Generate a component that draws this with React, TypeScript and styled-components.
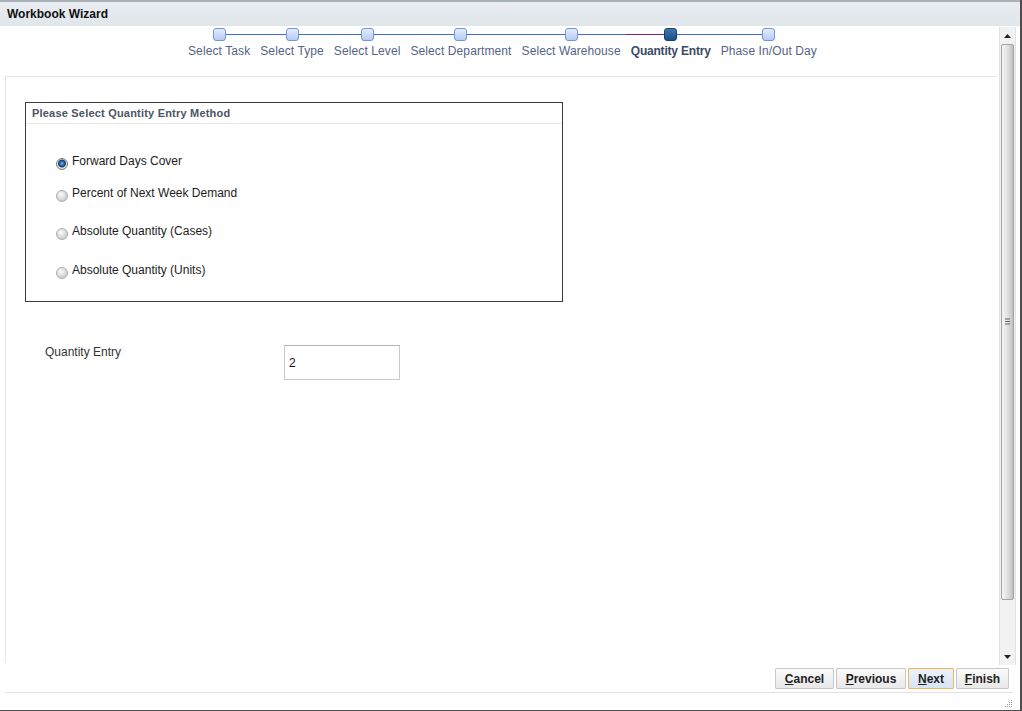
import React from "react";
import styled, { createGlobalStyle, css } from "styled-components";

const Global = createGlobalStyle`
  html, body { margin: 0; padding: 0; background: #ffffff; }
  body { font-family: "Liberation Sans", Arial, sans-serif; }
  * { box-sizing: border-box; }
`;

const Window = styled.div`
  width: 1022px;
  height: 711px;
  display: flex;
  flex-direction: column;
  background: #ffffff;
  border-right: 2px solid #4d4d4d;
  border-bottom: 1px solid #4d4d4d;
  overflow: hidden;
`;

const TitleBar = styled.div`
  height: 26px;
  flex: none;
  display: flex;
  align-items: center;
  padding: 0 7px;
  background: linear-gradient(#e9edf1, #e1e6eb);
  border-top: 2px solid #a9b1b9;
  font-size: 12px;
  font-weight: bold;
  color: #111;
`;

const Main = styled.div`
  flex: 1;
  display: flex;
  min-height: 0;
`;

const LeftColumn = styled.div`
  flex: 1;
  display: flex;
  flex-direction: column;
  min-width: 0;
`;

const Train = styled.div`
  height: 50px;
  flex: none;
  display: flex;
  justify-content: center;
  padding-left: 6px;
`;

const Step = styled.div<{ $first?: boolean; $last?: boolean; $leftColor?: string; $rightColor?: string }>`
  position: relative;
  display: flex;
  flex-direction: column;
  align-items: center;
  padding: 2px 5px 0;
  &::before, &::after {
    content: "";
    position: absolute;
    top: 8px;
    height: 1px;
  }
  &::before {
    left: 0;
    right: 50%;
    background: ${(p) => p.$leftColor || "#3c6fd6"};
    display: ${(p) => (p.$first ? "none" : "block")};
  }
  &::after {
    left: 50%;
    right: 0;
    background: ${(p) => p.$rightColor || "#3c6fd6"};
    display: ${(p) => (p.$last ? "none" : "block")};
  }
`;

const Node = styled.div<{ $current?: boolean }>`
  position: relative;
  z-index: 1;
  width: 13px;
  height: 13px;
  border-radius: 3px;
  ${(p) =>
    p.$current
      ? css`
          border: 1px solid #1d3f66;
          background: linear-gradient(#3f78b0, #1c4f86);
        `
      : css`
          border: 1px solid #6f94e0;
          background: linear-gradient(#e3ecfc, #b7ccf3);
        `}
`;

const StepLabel = styled.div<{ $current?: boolean }>`
  margin-top: 3px;
  font-size: 12px;
  line-height: 14px;
  white-space: nowrap;
  color: ${(p) => (p.$current ? "#3b4a66" : "#546484")};
  font-weight: ${(p) => (p.$current ? "bold" : "normal")};
  letter-spacing: ${(p) => (p.$current ? "-0.2px" : "0.1px")};
`;

const Panel = styled.div`
  flex: 1;
  margin: 0 2px 2px 5px;
  border-top: 1px solid #e6e6e6;
  border-left: 1px solid #e6e6e6;
  padding: 25px 0 0 19px;
`;

const MethodBox = styled.div`
  width: 538px;
  height: 200px;
  border: 1px solid #3a3a3a;
  display: flex;
  flex-direction: column;
`;

const BoxHeader = styled.div`
  height: 21px;
  flex: none;
  display: flex;
  align-items: center;
  padding: 0 6px;
  border-bottom: 1px solid #e8e8e8;
  font-size: 11px;
  font-weight: bold;
  letter-spacing: 0.2px;
  color: #4b5466;
`;

const RadioList = styled.div`
  display: flex;
  flex-direction: column;
  padding: 30px 0 0 30px;
`;

const RadioRow = styled.div<{ $gap: number }>`
  display: flex;
  align-items: flex-start;
  margin-top: ${(p) => p.$gap}px;
  height: 14px;
`;

const Radio = styled.span<{ $checked?: boolean }>`
  width: 12px;
  height: 12px;
  margin-top: 4px;
  margin-right: 4px;
  border-radius: 50%;
  flex: none;
  ${(p) =>
    p.$checked
      ? css`
          border: 1px solid #7a7a7a;
          background: radial-gradient(circle at 50% 45%, #7fb6e6 0, #2d6ba8 2px, #123e6a 3.5px, #eeeeee 4.5px, #c9c9c9 6px);
        `
      : css`
          border: 1px solid #adadad;
          background: radial-gradient(circle at 40% 35%, #fbfbfb 0, #e6e6e6 3px, #cfcfcf 6px);
        `}
`;

const RadioLabel = styled.span`
  font-size: 12px;
  line-height: 14px;
  color: #1c1c1c;
`;

const FormRow = styled.div`
  display: flex;
  align-items: flex-start;
  margin-top: 43px;
  padding-left: 20px;
`;

const FieldLabel = styled.div`
  width: 239px;
  font-size: 12px;
  line-height: 14px;
  color: #333;
`;

const TextInput = styled.div`
  width: 116px;
  height: 35px;
  border: 1px solid #c9c9c9;
  border-top-color: #b4b4b4;
  display: flex;
  align-items: center;
  padding: 0 4px;
  font-size: 12px;
  color: #111;
`;

const Scrollbar = styled.div`
  width: 17px;
  flex: none;
  margin: 1px 4px 0 0;
  display: flex;
  flex-direction: column;
  background: #f2f2f2;
  border-left: 1px solid #e2e2e2;
  border-right: 1px solid #e2e2e2;
`;

const Arrow = styled.div`
  height: 17px;
  flex: none;
  display: flex;
  align-items: center;
  justify-content: center;
`;

const Thumb = styled.div`
  height: 556px;
  margin: 0 1px;
  border: 1px solid #a3a3a3;
  border-radius: 2px;
  background: linear-gradient(90deg, #f4f4f4, #e6e6e6 40%, #cfcfcf 80%, #bdbdbd);
  display: flex;
  align-items: center;
  justify-content: center;
`;

const Track = styled.div`
  flex: 1;
`;

const Footer = styled.div`
  height: 45px;
  flex: none;
  display: flex;
  flex-direction: column;
`;

const ButtonRow = styled.div`
  display: flex;
  justify-content: flex-end;
  gap: 2px;
  padding: 3px 11px 0 0;
`;

const Button = styled.button<{ $focused?: boolean; $width: number }>`
  width: ${(p) => p.$width}px;
  height: 21px;
  padding: 0;
  font-family: "Liberation Sans", Arial, sans-serif;
  font-size: 12px;
  font-weight: bold;
  color: #222;
  border-radius: 1px;
  ${(p) =>
    p.$focused
      ? css`
          border: 1px solid #edb75a;
          background: linear-gradient(#ecf2fa, #d8e4f3);
        `
      : css`
          border: 1px solid #c8c8c8;
          background: linear-gradient(#fafafa, #e8e8e8);
        `}
  u { text-decoration: underline; }
`;

const BottomBar = styled.div`
  flex: 1;
  margin: 3px 7px 0 5px;
  border-top: 1px solid #e2e2e2;
  display: flex;
  justify-content: flex-end;
  align-items: flex-end;
  padding-bottom: 2px;
`;

const ArrowUp = () => (
  <svg width="7" height="4" viewBox="0 0 7 4">
    <path d="M0 4 L3.5 0 L7 4 Z" fill="#222" />
  </svg>
);
const ArrowDown = () => (
  <svg width="7" height="4" viewBox="0 0 7 4">
    <path d="M0 0 L3.5 4 L7 0 Z" fill="#222" />
  </svg>
);
const Grip = () => (
  <svg width="7" height="8" viewBox="0 0 7 8">
    <g stroke="#666" strokeWidth="1">
      <path d="M1 1 H6 M1 3.5 H6 M1 6 H6" />
    </g>
  </svg>
);
const ResizeGrip = () => (
  <svg width="10" height="10" viewBox="0 0 10 10">
    <g fill="#9a9a9a">
      <rect x="8" y="2" width="1" height="1" />
      <rect x="6" y="4" width="1" height="1" />
      <rect x="8" y="4" width="1" height="1" />
      <rect x="4" y="6" width="1" height="1" />
      <rect x="6" y="6" width="1" height="1" />
      <rect x="8" y="6" width="1" height="1" />
      <rect x="2" y="8" width="1" height="1" />
      <rect x="4" y="8" width="1" height="1" />
      <rect x="6" y="8" width="1" height="1" />
      <rect x="8" y="8" width="1" height="1" />
    </g>
  </svg>
);

const steps = [
  "Select Task",
  "Select Type",
  "Select Level",
  "Select Department",
  "Select Warehouse",
  "Quantity Entry",
  "Phase In/Out Day",
];
const currentIndex = 5;

const options = [
  { label: "Forward Days Cover", gap: 0, checked: true },
  { label: "Percent of Next Week Demand", gap: 18 },
  { label: "Absolute Quantity (Cases)", gap: 24 },
  { label: "Absolute Quantity (Units)", gap: 25 },
];

export default function App() {
  return (
    <>
      <Global />
      <Window>
        <TitleBar>Workbook Wizard</TitleBar>
        <Main>
          <LeftColumn>
            <Train>
              {steps.map((s, i) => (
                <Step
                  key={s}
                  $first={i === 0}
                  $last={i === steps.length - 1}
                  $leftColor={i === currentIndex ? "#7d1f7d" : undefined}
                >
                  <Node $current={i === currentIndex} />
                  <StepLabel $current={i === currentIndex}>{s}</StepLabel>
                </Step>
              ))}
            </Train>
            <Panel>
              <MethodBox>
                <BoxHeader>Please Select Quantity Entry Method</BoxHeader>
                <RadioList>
                  {options.map((o) => (
                    <RadioRow key={o.label} $gap={o.gap}>
                      <Radio $checked={o.checked} />
                      <RadioLabel>{o.label}</RadioLabel>
                    </RadioRow>
                  ))}
                </RadioList>
              </MethodBox>
              <FormRow>
                <FieldLabel>Quantity Entry</FieldLabel>
                <TextInput>2</TextInput>
              </FormRow>
            </Panel>
          </LeftColumn>
          <Scrollbar>
            <Arrow>
              <ArrowUp />
            </Arrow>
            <Thumb>
              <Grip />
            </Thumb>
            <Track />
            <Arrow>
              <ArrowDown />
            </Arrow>
          </Scrollbar>
        </Main>
        <Footer>
          <ButtonRow>
            <Button $width={59}>
              <u>C</u>ancel
            </Button>
            <Button $width={70}>
              <u>P</u>revious
            </Button>
            <Button $width={46} $focused>
              <u>N</u>ext
            </Button>
            <Button $width={53}>
              <u>F</u>inish
            </Button>
          </ButtonRow>
          <BottomBar>
            <ResizeGrip />
          </BottomBar>
        </Footer>
      </Window>
    </>
  );
}
